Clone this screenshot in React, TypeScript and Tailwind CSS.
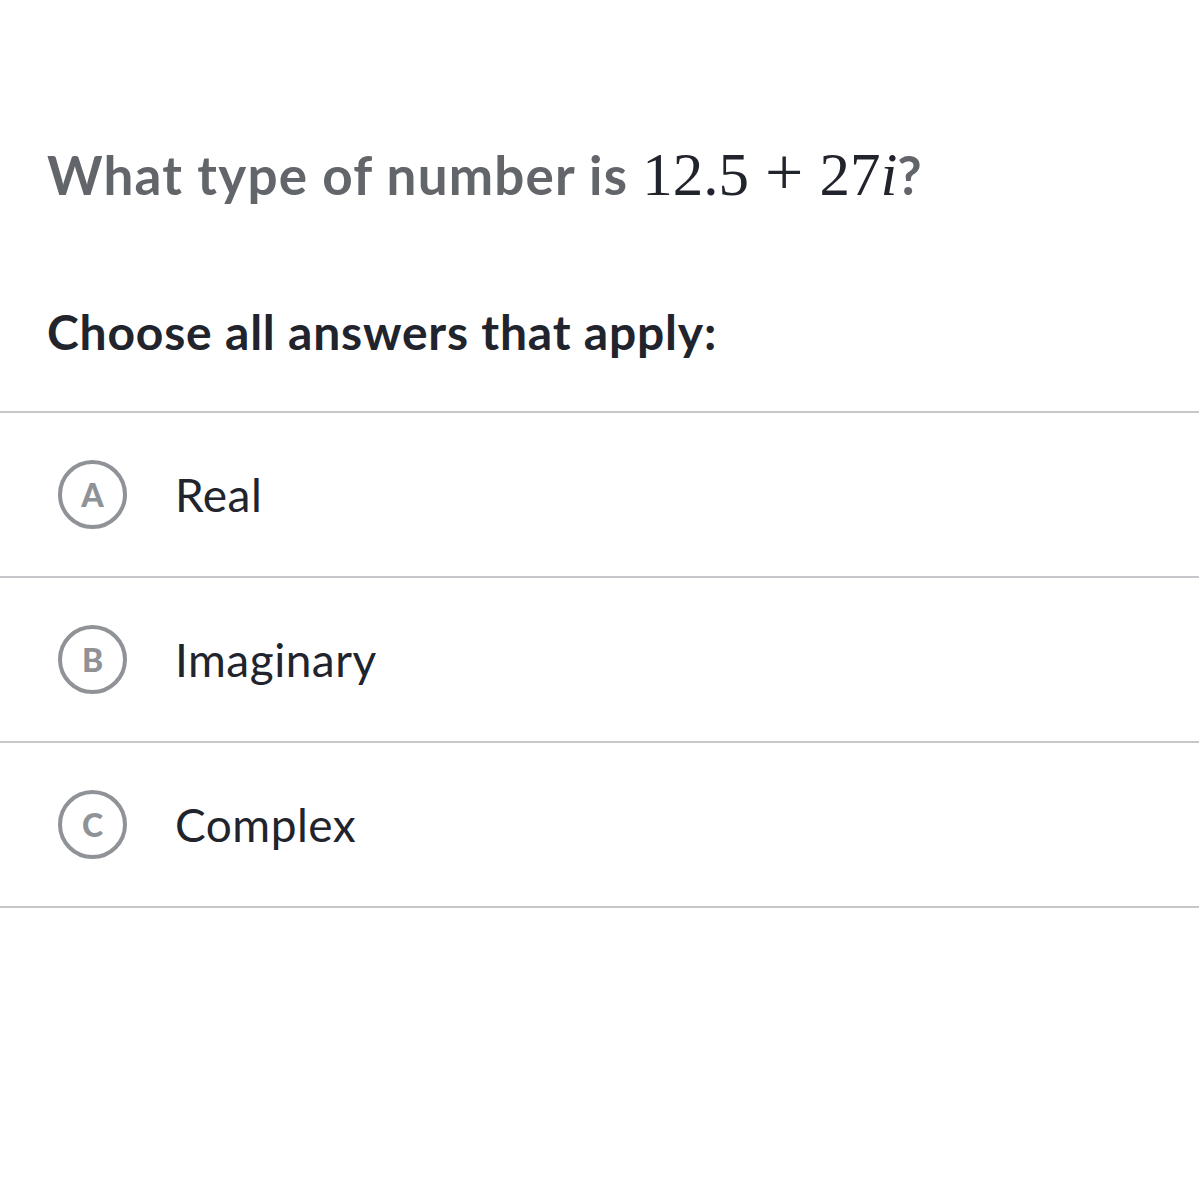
import React from "react";

const options = [
  { letter: "A", text: "Real" },
  { letter: "B", text: "Imaginary" },
  { letter: "C", text: "Complex" },
];

export default function App() {
  return (
    <div className="w-[1199px] h-[1200px] bg-white" style={{ fontFamily: "Lato, 'Noto Sans', sans-serif" }}>
      <div className="pt-[136px] pl-[47px]">
        <div className="h-[72px] text-[53px] font-bold text-[#626569] leading-[72px] flex items-baseline tracking-[1.2px]">
          <span>What type of number is&nbsp;</span>
          <span className="font-normal text-[#21242c] text-[61px] tracking-normal" style={{ fontFamily: "'Liberation Serif', 'DejaVu Serif', serif" }}>
            12.5<span className="mx-[16px] text-[68px]">+</span>27<span className="italic">i</span>
          </span>
          <span>?</span>
        </div>
      </div>
      <div className="pt-[94px] pl-[47px]">
        <div className="text-[48px] font-bold text-[#21242c] leading-[60px] tracking-[0.8px]">Choose all answers that apply:</div>
      </div>
      <div className="mt-[49px] border-t-2 border-[#c6c6cb]">
        {options.map((o) => (
          <div key={o.letter} className="h-[165px] border-b-2 border-[#c6c6cb] flex items-center pl-[58px]">
            <div className="w-[69px] h-[69px] rounded-full border-[4px] border-[#8f9297] flex items-center justify-center text-[#8f9297] text-[32px] font-black shrink-0">
              {o.letter}
            </div>
            <div className="ml-[48px] text-[46px] text-[#21242c] leading-none tracking-[0.5px]">{o.text}</div>
          </div>
        ))}
      </div>
    </div>
  );
}
